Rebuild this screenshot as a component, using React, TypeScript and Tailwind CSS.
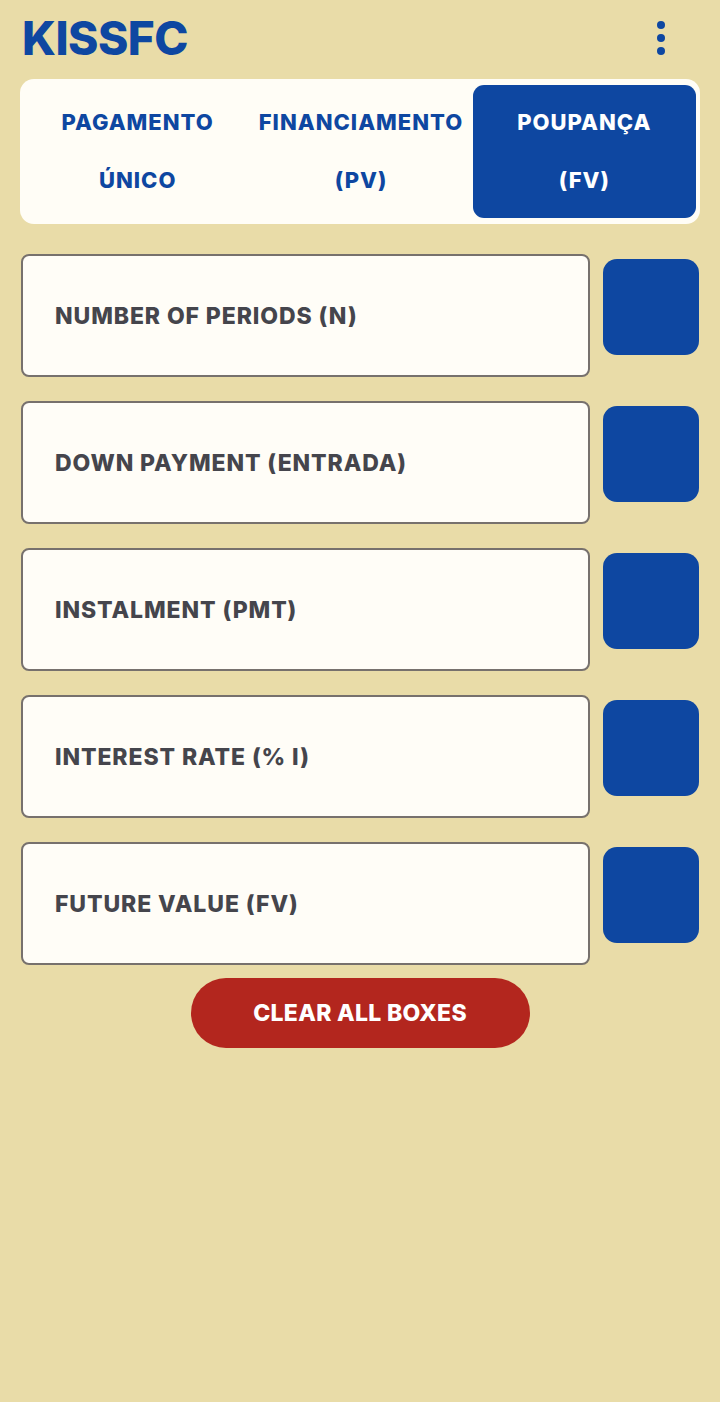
import React from 'react';

const fields = [
  'NUMBER OF PERIODS (N)',
  'DOWN PAYMENT (ENTRADA)',
  'INSTALMENT (PMT)',
  'INTEREST RATE (% I)',
  'FUTURE VALUE (FV)',
];

const tabs = [
  { top: 'PAGAMENTO', bottom: 'ÚNICO', active: false },
  { top: 'FINANCIAMENTO', bottom: '(PV)', active: false },
  { top: 'POUPANÇA', bottom: '(FV)', active: true },
];

export default function App() {
  return (
    <div className="min-h-[1402px] w-[720px] bg-[#e9dca8] font-['Inter',sans-serif]">
      {/* header */}
      <div className="flex h-[79px] items-center justify-between pl-[22px] pr-[55px] pb-[4px]">
        <h1 className="text-[46px] font-extrabold leading-none tracking-[-0.5px] text-[#0e47a1]">KISSFC</h1>
        <div className="flex flex-col gap-[5px]">
          <span className="h-[8px] w-[8px] rounded-full bg-[#0e47a1]" />
          <span className="h-[8px] w-[8px] rounded-full bg-[#0e47a1]" />
          <span className="h-[8px] w-[8px] rounded-full bg-[#0e47a1]" />
        </div>
      </div>

      {/* tabs */}
      <div className="mx-[20px] flex h-[145px] rounded-[14px] bg-[#fffdf6] p-[6px] pr-[4px]">
        {tabs.map((t) => (
          <div
            key={t.top}
            className={`flex flex-1 flex-col items-center justify-center rounded-[11px] pb-[2px] text-[22px] font-extrabold leading-[58px] tracking-[1px] ${
              t.active ? 'bg-[#0e47a1] text-white' : 'text-[#0e47a1]'
            }`}
          >
            <span>{t.top}</span>
            <span>{t.bottom}</span>
          </div>
        ))}
      </div>

      {/* fields */}
      <div className="mt-[30px] flex flex-col gap-[24px] pl-[21px] pr-[21px]">
        {fields.map((f) => (
          <div key={f} className="flex items-start gap-[13px]">
            <div className="flex h-[123px] w-[569px] items-center rounded-[8px] border-2 border-[#77716d] bg-[#fffdf7] pl-[32px] pt-[2px]">
              <span className="text-[23px] font-extrabold tracking-[0.9px] text-[#45454c]">{f}</span>
            </div>
            <div className="mt-[5px] h-[96px] w-[96px] rounded-[14px] bg-[#0e47a1]" />
          </div>
        ))}
      </div>

      <div className="mt-[13px] flex justify-center">
        <button className="h-[70px] w-[339px] rounded-full bg-[#b3261e] text-[23px] font-extrabold tracking-[0.3px] text-white">
          CLEAR ALL BOXES
        </button>
      </div>
    </div>
  );
}
